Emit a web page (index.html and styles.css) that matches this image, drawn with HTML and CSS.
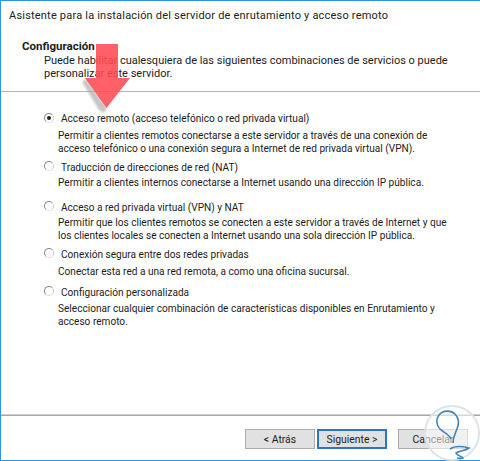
FILE: index.html
```html
<!DOCTYPE html>
<html lang="es">
<head>
<meta charset="utf-8">
<title>Asistente</title>
<link rel="stylesheet" href="styles.css">
</head>
<body>
<div class="dialog">
  <header class="head">
    <div class="title">Asistente para la instalación del servidor de enrutamiento y acceso remoto</div>
    <div class="section">Configuración</div>
    <div class="intro">Puede habilitar cualesquiera de las siguientes combinaciones de servicios o puede<br>personalizar este servidor.</div>
  </header>
  <main class="options">
    <div class="opt opt-a">
      <div class="label"><span class="radio checked"></span>Acceso remoto (acceso telefónico o red privada virtual)</div>
      <p class="desc">Permitir a clientes remotos conectarse a este servidor a través de una conexión de<br>acceso telefónico o una conexión segura a Internet de red privada virtual (VPN).</p>
    </div>
    <div class="opt opt-b">
      <div class="label"><span class="radio"></span>Traducción de direcciones de red (NAT)</div>
      <p class="desc">Permitir a clientes internos conectarse a Internet usando una dirección IP pública.</p>
    </div>
    <div class="opt opt-c">
      <div class="label"><span class="radio"></span>Acceso a red privada virtual (VPN) y NAT</div>
      <p class="desc">Permitir que los clientes remotos se conecten a este servidor a través de Internet y que<br>los clientes locales se conecten a Internet usando una sola dirección IP pública.</p>
    </div>
    <div class="opt opt-d">
      <div class="label"><span class="radio"></span>Conexión segura entre dos redes privadas</div>
      <p class="desc">Conectar esta red a una red remota, a como una oficina sucursal.</p>
    </div>
    <div class="opt opt-e">
      <div class="label"><span class="radio"></span>Configuración personalizada</div>
      <p class="desc">Seleccionar cualquier combinación de características disponibles en Enrutamiento y<br>acceso remoto.</p>
    </div>
  </main>
  <footer class="foot">
    <button class="btn">&lt; Atrás</button>
    <button class="btn primary">Siguiente &gt;</button>
    <button class="btn cancel">Cancelar</button>
  </footer>
  <svg class="arrow" width="64" height="72" viewBox="0 0 64 72">
    <path class="arrow-shadow" d="M0 38 L4 35 L25 64 L22 69 L17 66 Z"/>
    <path class="arrow-body" d="M14 0 H36 V34 H48 L24.500 64 L3 34 H14 Z"/>
  </svg>
  <svg class="logo" width="58" height="58" viewBox="0 0 58 58">
    <circle class="logo-disc" cx="29" cy="29" r="27"/>
    <path class="logo-bulb" d="M28 35 C26 30 21 29 17 25 C13 21 13 15 16 11 C20 6 28 6 32 10 C36 14 36 20 34 25 C32 30 30 33 30 39"/>
    <path class="logo-s" d="M27 45 C31 42 38 42 46 44 C42 47 35 47 33 49 C35 52 40 53 40 54 C38 55 36 54 34 54"/>
  </svg>
</div>
</body>
</html>
```
FILE: styles.css
```css
* { box-sizing: border-box; }
html, body { margin: 0; padding: 0; }
body {
  width: 480px;
  height: 461px;
  overflow: hidden;
  background: #fff;
  font-family: Roboto, "Open Sans", sans-serif;
  font-size: 11px;
  color: #1c1c1c;
}
.dialog {
  position: relative;
  width: 480px;
  height: 461px;
  display: flex;
  flex-direction: column;
  border: 1px solid #2b94e6;
  border-right: 0;
  background: #fff;
}
.head {
  height: 91px;
  flex: none;
  padding: 7px 0 0 8px;
  border-bottom: 1px solid #b4b4b4;
}
.title { line-height: 16px; letter-spacing: .2px; }
.section {
  margin: 16px 0 0 13px;
  line-height: 13px;
  font-weight: 700;
  font-size: 11.5px;
}
.intro { margin: 1px 0 0 35px; line-height: 13px; }
.options {
  flex: 1;
  padding: 20px 0 0 43px;
  border-bottom: 1px solid #a8a8a8;
  box-shadow: inset 0 -1px #cfcfcf;
  font-size: 10.1px;
  white-space: nowrap;
}
.opt-a { margin-bottom: 6px; }
.opt-b { margin-bottom: 12px; }
.opt-c { margin-bottom: 6px; }
.opt-d { margin-bottom: 8px; }
.label { position: relative; line-height: 14px; padding-left: 17px; }
.radio {
  position: absolute;
  left: 0;
  top: 0;
  width: 10px;
  height: 10px;
  border: 1px solid;
  border-color: #858585 #cfcfcf #dcdcdc #858585;
  border-radius: 50%;
  background: #fff;
}
.radio.checked { top: 1px; }
.radio.checked::after {
  content: "";
  position: absolute;
  left: 2px;
  top: 2px;
  width: 4px;
  height: 4px;
  border-radius: 50%;
  background: #222;
}
.desc { margin: 3px 0 0 14px; line-height: 13px; }
.opt-b .desc { margin-top: 1px; }
.opt-c .desc { margin-top: 1px; }
.opt-e .desc { margin-top: 2px; }
.foot {
  height: 44px;
  flex: none;
  display: flex;
  padding: 13px 0 0 244px;
}
.btn {
  width: 70px;
  height: 20px;
  padding: 0;
  border: 1px solid #adadad;
  background: #e1e1e1;
  font: inherit;
  font-size: 10.4px;
  color: #1c1c1c;
}
.primary { margin-left: 2px; border: 2px solid #2a75c9; }
.cancel { margin-left: 11px; }
.arrow { position: absolute; left: 81px; top: 43px; }
.arrow-shadow { fill: #a8a8a8; opacity: .65; filter: blur(1.2px); }
.arrow-body { fill: #fe4b52; opacity: .88; }
.logo { position: absolute; left: 422px; top: 403px; }
.logo-disc { fill: rgba(255,255,255,.55); stroke: #dde3e8; stroke-width: 2; }
.logo-bulb, .logo-s { fill: none; stroke: #3f86ba; stroke-width: 1.6; }
```
